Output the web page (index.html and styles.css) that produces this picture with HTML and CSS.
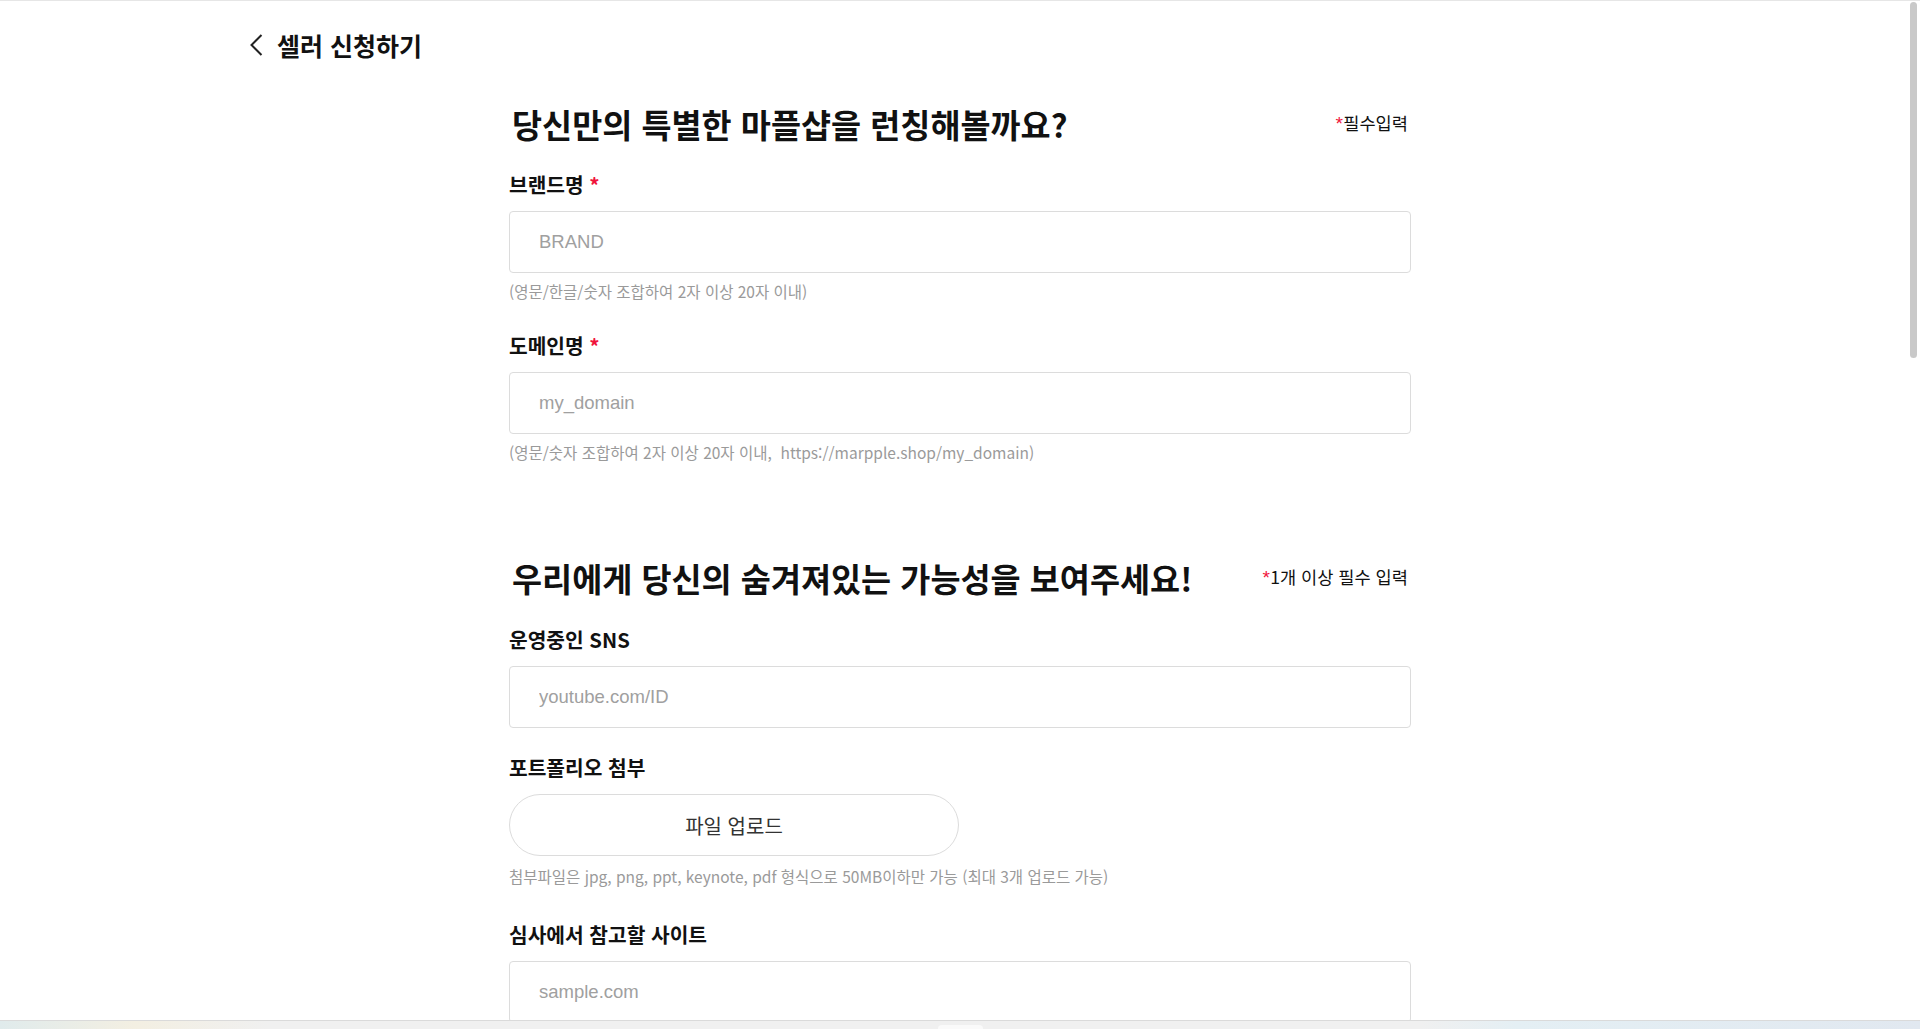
FILE: index.html
```html
<!DOCTYPE html>
<html lang="ko">
<head>
<meta charset="utf-8">
<title>셀러 신청하기</title>
<link rel="stylesheet" href="styles.css">
</head>
<body>
<div class="topline"></div>
<header class="header">
  <a class="back" href="#">
    <svg class="back-icon" width="13" height="22" viewBox="0 0 13 22"><polyline points="11.5,1 1.5,11 11.5,21" fill="none" stroke="#222" stroke-width="2"/></svg>
    <span class="back-text">셀러 신청하기</span>
  </a>
</header>
<main class="form">
  <div class="section-head">
    <h2 class="section-title">당신만의 특별한 마플샵을 런칭해볼까요?</h2>
    <span class="section-note"><span class="star star-note">*</span>필수입력</span>
  </div>

  <div class="field field-first">
    <label class="label">브랜드명 <span class="star">*</span></label>
    <input class="input" type="text" placeholder="BRAND">
    <p class="help">(영문/한글/숫자 조합하여 2자 이상 20자 이내)</p>
  </div>

  <div class="field field-gap">
    <label class="label">도메인명 <span class="star">*</span></label>
    <input class="input" type="text" placeholder="my_domain">
    <p class="help">(영문/숫자 조합하여 2자 이상 20자 이내,&nbsp; https://marpple.shop/my_domain)</p>
  </div>

  <div class="section-head section-second">
    <h2 class="section-title">우리에게 당신의 숨겨져있는 가능성을 보여주세요!</h2>
    <span class="section-note"><span class="star star-note">*</span>1개 이상 필수 입력</span>
  </div>

  <div class="field field-sns">
    <label class="label">운영중인 SNS</label>
    <input class="input" type="text" placeholder="youtube.com/ID">
  </div>

  <div class="field field-tight">
    <label class="label">포트폴리오 첨부</label>
    <button class="upload" type="button">파일 업로드</button>
    <p class="help help-upload">첨부파일은 jpg, png, ppt, keynote, pdf 형식으로 50MB이하만 가능 (최대 3개 업로드 가능)</p>
  </div>

  <div class="field field-wide">
    <label class="label">심사에서 참고할 사이트</label>
    <input class="input" type="text" placeholder="sample.com">
  </div>
</main>

<div class="scroll-thumb"></div>
<div class="bottom-bar"><div class="bottom-tab"></div></div>
</body>
</html>
```

FILE: styles.css
```css
html, body {
  margin: 0;
  padding: 0;
  height: 100%;
  overflow: hidden;
  background: #fff;
}
body {
  font-family: "Noto Sans CJK KR", "Noto Sans", sans-serif;
  color: #111;
}
.topline {
  height: 1px;
  background: #e6e6e6;
}
.header {
  width: 1420px;
  margin: 0 auto;
  height: 88px;
  display: flex;
  align-items: center;
}
.back {
  display: flex;
  align-items: center;
  text-decoration: none;
  color: #111;
}
.back-icon {
  margin-right: 14px;
  margin-top: -1px;
}
.back-text {
  font-size: 25px;
  font-weight: 700;
  line-height: 32px;
}
.form {
  width: 902px;
  margin: 0 auto;
}
.section-head {
  margin-top: 15px;
  height: 40px;
  padding: 0 3px;
  display: flex;
  align-items: center;
  justify-content: space-between;
}
.section-second {
  margin-top: 96px;
}
.section-title {
  margin: 0;
  font-size: 32.7px;
  font-weight: 700;
  line-height: 40px;
  color: #111;
}
.section-note {
  font-size: 17.6px;
  line-height: 24px;
  color: #111;
  margin-top: -2px;
}
.star {
  color: #f0143c;
}
.star-note {
  font-family: "Liberation Sans", Arial, sans-serif;
  font-style: italic;
  font-size: 19px;
  margin-right: 1px;
}
.field {
  display: flex;
  flex-direction: column;
}
.field-first { margin-top: 27px; }
.field-sns { margin-top: 28px; }
.field-gap { margin-top: 31px; }
.field-tight { margin-top: 26px; }
.field-wide { margin-top: 35px; }
.label {
  font-size: 20.3px;
  font-weight: 700;
  line-height: 26px;
  height: 26px;
  margin-bottom: 14px;
  color: #111;
}
.input {
  box-sizing: border-box;
  width: 100%;
  height: 62px;
  border: 1px solid #dcdcdc;
  border-radius: 4px;
  padding: 0 29px;
  font-family: "Liberation Sans", Arial, sans-serif;
  font-size: 18.5px;
  color: #222;
  background: #fff;
  outline: none;
}
.input::placeholder {
  color: #a0a0a0;
}
.help {
  margin: 8px 0 0;
  font-size: 15.5px;
  line-height: 20px;
  color: #9a9a9a;
}
.help-upload {
  margin-top: 10px;
}
.upload {
  box-sizing: border-box;
  width: 450px;
  height: 62px;
  border: 1px solid #dcdcdc;
  border-radius: 31px;
  background: #fff;
  font-family: "Noto Sans CJK KR", "Noto Sans", sans-serif;
  font-size: 20px;
  font-weight: 400;
  color: #333;
  padding: 0;
}
.scroll-thumb {
  position: fixed;
  top: 2px;
  right: 3px;
  width: 7px;
  height: 356px;
  border-radius: 4px;
  background: #c9c9c9;
}
.bottom-bar {
  position: fixed;
  left: 0;
  right: 0;
  bottom: 0;
  height: 8px;
  border-top: 1px solid #dadada;
  background: linear-gradient(to right, #e0ebec 0%, #f3efe2 7%, #f0f0f0 14%, #f0f0f0 74%, #e4eff4 79%, #e1e8f0 100%);
}
.bottom-tab {
  position: absolute;
  left: 938px;
  top: 4px;
  width: 45px;
  height: 6px;
  border-radius: 4px 4px 0 0;
  background: #fafafa;
}
```
